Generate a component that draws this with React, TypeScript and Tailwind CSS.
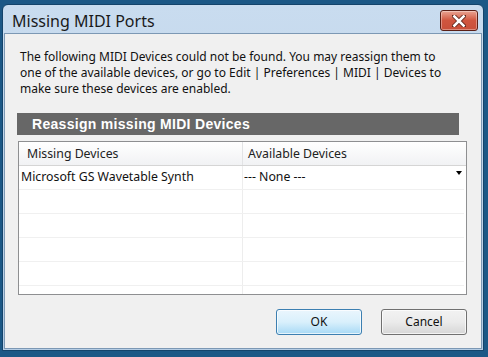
import React from 'react';

const ui = { fontFamily: '"Noto Sans", "Open Sans", sans-serif' };
const bar = { fontFamily: '"Liberation Sans", Arial, sans-serif' };

function CloseButton() {
  return (
    <div className="mt-[5px] w-[38px] h-[21px] rounded-[3px] border border-[#5a1f16] bg-gradient-to-b from-[#e9a493] via-[#d0553e] to-[#c9503a] flex items-center justify-center shadow-[inset_0_0_0_1px_rgba(255,255,255,0.35)]">
      <svg width="14" height="12" viewBox="0 0 14 12">
        <path d="M2 1 L12 11 M12 1 L2 11" stroke="#5b2318" strokeWidth="4.2" strokeLinecap="square" />
        <path d="M2.4 1.4 L11.6 10.6 M11.6 1.4 L2.4 10.6" stroke="#ffffff" strokeWidth="2.6" strokeLinecap="square" />
      </svg>
    </div>
  );
}

function Row({ left, right }: { left?: string; right?: string }) {
  return (
    <div className="flex h-[24px] border-b border-[#f0f0f0] mr-[2px]">
      <div className="w-[224px] border-r border-[#ededed] pl-[2px] flex items-center text-[12.3px] text-[#111]">{left}</div>
      <div className="flex-1 flex items-center justify-between text-[12.3px] text-[#111] relative">
        <span className="pl-[1px]">{right}</span>
        {right && (
          <svg className="absolute right-[2px] top-[5px]" width="6" height="4" viewBox="0 0 6 4">
            <path d="M0 0 H6 L3 4 Z" fill="#000" />
          </svg>
        )}
      </div>
    </div>
  );
}

export default function App() {
  return (
    <div className="w-[488px] h-[357px] overflow-hidden bg-[#1c5886] pt-[4px] pl-[2px]" style={ui}>
      <div className="w-[482px] h-[347px] rounded-t-[6px] border border-[#14446b] bg-gradient-to-b from-[#c9dcef] to-[#b5cde5] flex flex-col pb-[1px] px-[1px]">
        {/* title bar */}
        <div className="h-[28px] flex items-start justify-between pl-[8px] pr-[4px]">
          <span className="mt-[6px] text-[16px] leading-[20px] text-[#1a1a1a]">Missing MIDI Ports</span>
          <CloseButton />
        </div>

        {/* client area */}
        <div className="flex-1 border border-[#7c98b4] bg-[#f0f0f0] flex flex-col pl-[12px] pr-[14px] pt-[15px]">
          <p className="pl-[3px] text-[12px] leading-[16px] text-[#111] w-[440px]">
            The following MIDI Devices could not be found. You may reassign them to one of the available devices, or go to Edit | Preferences | MIDI | Devices to make sure these devices are enabled.
          </p>

          <div className="mt-[16px] w-[442px] h-[22px] bg-[#676767] flex items-center pl-[15px] text-white text-[14px] font-bold tracking-[0.3px]" style={bar}>
            Reassign missing MIDI Devices
          </div>

          <div className="mt-[6px] ml-[1px] w-[449px] h-[154px] border border-[#8e8f91] bg-white overflow-hidden">
            <div className="flex h-[24px] border-b border-[#d5d5d5] bg-gradient-to-b from-white to-[#f1f2f4] text-[12.3px] text-[#222]">
              <div className="w-[224px] border-r border-[#e2e3e5] pl-[8px] flex items-center pt-[2px]">Missing Devices</div>
              <div className="flex-1 pl-[5px] flex items-center pt-[2px]">Available Devices</div>
            </div>
            <Row left="Microsoft GS Wavetable Synth" right="--- None ---" />
            <Row />
            <Row />
            <Row />
            <Row />
            <Row />
          </div>

          <div className="mt-[14px] flex justify-end gap-[19px]">
            <button className="w-[86px] h-[26px] rounded-[3px] border border-[#3c7fb1] bg-gradient-to-b from-[#eaf6fd] via-[#d9f0fc] to-[#a7d9f5] text-[12px] text-[#111] shadow-[inset_0_0_0_1px_rgba(255,255,255,0.7)]">
              OK
            </button>
            <button className="w-[86px] h-[26px] rounded-[3px] border border-[#707070] bg-gradient-to-b from-[#f2f2f2] via-[#ebebeb] to-[#d6d6d6] text-[12px] text-[#111] shadow-[inset_0_0_0_1px_rgba(255,255,255,0.7)]">
              Cancel
            </button>
          </div>
        </div>
      </div>
    </div>
  );
}
